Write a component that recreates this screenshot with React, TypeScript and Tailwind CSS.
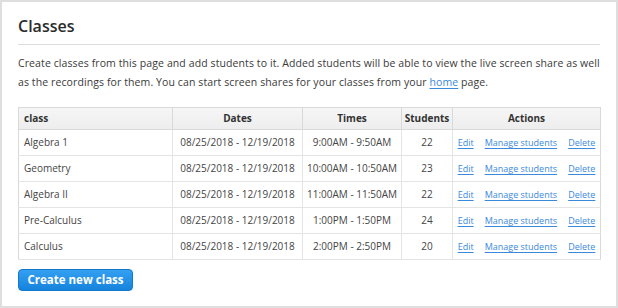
import React from 'react';

type ClassRow = {
  name: string;
  dates: string;
  times: string;
  students: number;
};

const rows: ClassRow[] = [
  { name: 'Algebra 1', dates: '08/25/2018 - 12/19/2018', times: '9:00AM - 9:50AM', students: 22 },
  { name: 'Geometry', dates: '08/25/2018 - 12/19/2018', times: '10:00AM - 10:50AM', students: 23 },
  { name: 'Algebra II', dates: '08/25/2018 - 12/19/2018', times: '11:00AM - 11:50AM', students: 22 },
  { name: 'Pre-Calculus', dates: '08/25/2018 - 12/19/2018', times: '1:00PM - 1:50PM', students: 24 },
  { name: 'Calculus', dates: '08/25/2018 - 12/19/2018', times: '2:00PM - 2:50PM', students: 20 },
];

const linkCls = 'text-[#3b89db] underline underline-offset-[1.5px] decoration-[#3b89db]';

const App: React.FC = () => {
  return (
    <div
      className="w-[618px] h-[308px] border-2 border-[#dedede] bg-white px-4 text-[#333]"
      style={{ fontFamily: '"Open Sans", "Noto Sans", sans-serif' }}
    >
      {/* Heading */}
      <div className="mt-[13px] pb-[7px] border-b border-[#dcdcdc]">
        <h1 className="text-[16px] leading-[22px] font-semibold text-[#2b2b2b]">Classes</h1>
      </div>

      {/* Intro */}
      <p className="mt-[9px] text-[10.5px] leading-[19px] tracking-[0.1px] text-[#3a3a3a]">
        Create classes from this page and add students to it. Added students will be able to view the live screen share as well
        as the recordings for them. You can start screen shares for your classes from your{' '}
        <a href="#" className={linkCls}>home</a> page.
      </p>

      {/* Class table */}
      <table className="mt-[15px] w-[582px] table-fixed border-collapse border border-[#d9d9d9] text-[10px] text-[#444]">
        <colgroup>
          <col className="w-[154px]" />
          <col className="w-[130px]" />
          <col className="w-[99px]" />
          <col className="w-[51px]" />
          <col className="w-[148px]" />
        </colgroup>
        <thead>
          <tr className="h-[22px] bg-gradient-to-b from-[#f6f6f6] to-[#ededed] text-[#333]">
            <th className="border border-[#d9d9d9] px-[5px] text-left font-bold">class</th>
            <th className="border border-[#d9d9d9] text-center font-bold">Dates</th>
            <th className="border border-[#d9d9d9] text-center font-bold">Times</th>
            <th className="border border-[#d9d9d9] text-center font-bold">Students</th>
            <th className="border border-[#d9d9d9] text-center font-bold">Actions</th>
          </tr>
        </thead>
        <tbody>
          {rows.map((r) => (
            <tr key={r.name} className="h-[26px]">
              <td className="border-b border-r border-[#e4e4e4] px-[5px] text-left">{r.name}</td>
              <td className="border-b border-r border-[#e4e4e4] text-center">{r.dates}</td>
              <td className="border-b border-r border-[#e4e4e4] text-center">{r.times}</td>
              <td className="border-b border-r border-[#e4e4e4] text-center">{r.students}</td>
              <td className="border-b border-[#e4e4e4]">
                <div className="flex items-center justify-center gap-[11px] text-[9px]">
                  <a href="#" className={linkCls}>Edit</a>
                  <a href="#" className={linkCls}>Manage students</a>
                  <a href="#" className={linkCls}>Delete</a>
                </div>
              </td>
            </tr>
          ))}
        </tbody>
      </table>

      {/* Create button */}
      <button
        type="button"
        className="mt-[9px] h-[22px] w-[115px] rounded-[4px] border border-[#1479c9] bg-gradient-to-b from-[#33a0f2] to-[#1583dc] text-[11.5px] font-bold text-white"
      >
        Create new class
      </button>
    </div>
  );
};

export default App;
